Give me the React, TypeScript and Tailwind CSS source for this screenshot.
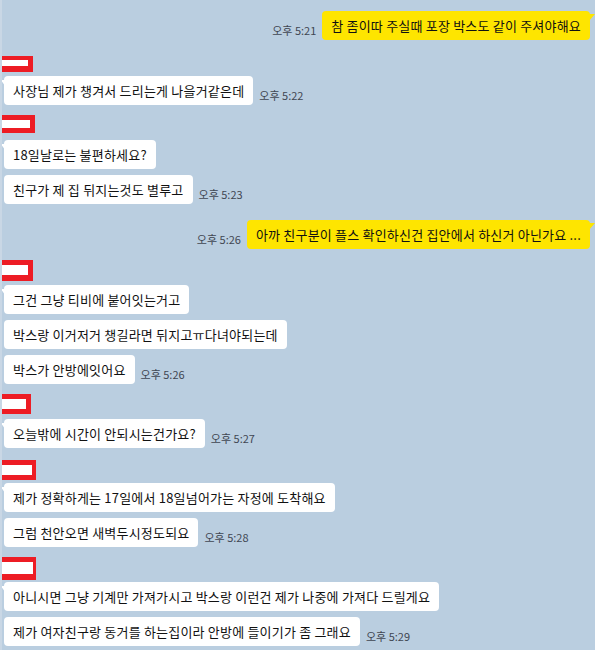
type Item =
  | { kind: "me"; mt: number; text: string; time?: string }
  | { kind: "them"; mt: number; text: string; time?: string; tail?: boolean }
  | { kind: "name"; mt: number; w: number; h: number; inner: [number, number, number] };

// inner = [top, right, bottom] red border widths around the white fill
const items: Item[] = [
  { kind: "me", mt: 11, text: "참 좀이따 주실때 포장 박스도 같이 주셔야해요", time: "오후 5:21" },
  { kind: "name", mt: 16, w: 31, h: 16, inner: [4, 5, 6] },
  { kind: "them", mt: 4, text: "사장님 제가 챙겨서 드리는게 나을거같은데", time: "오후 5:22", tail: true },
  { kind: "name", mt: 10, w: 33, h: 18, inner: [5, 5, 5] },
  { kind: "them", mt: 7, text: "18일날로는 불편하세요?", tail: true },
  { kind: "them", mt: 6, text: "친구가 제 집 뒤지는것도 별루고", time: "오후 5:23" },
  { kind: "me", mt: 16, text: "아까 친구분이 플스 확인하신건 집안에서 하신거 아닌가요 ...", time: "오후 5:26" },
  { kind: "name", mt: 11, w: 31, h: 21, inner: [5, 5, 6] },
  { kind: "them", mt: 4, text: "그건 그냥 티비에 붙어잇는거고", tail: true },
  { kind: "them", mt: 6, text: "박스랑 이거저거 챙길라면 뒤지고ㅠ다녀야되는데" },
  { kind: "them", mt: 6, text: "박스가 안방에잇어요", time: "오후 5:26" },
  { kind: "name", mt: 10, w: 29, h: 20, inner: [5, 5, 5] },
  { kind: "them", mt: 5, text: "오늘밖에 시간이 안되시는건가요?", time: "오후 5:27", tail: true },
  { kind: "name", mt: 12, w: 34, h: 20, inner: [5, 4, 5] },
  { kind: "them", mt: 3, text: "제가 정확하게는 17일에서 18일넘어가는 자정에 도착해요", tail: true },
  { kind: "them", mt: 6, text: "그럼 천안오면 새벽두시정도되요", time: "오후 5:28" },
  { kind: "name", mt: 10, w: 34, h: 23, inner: [5, 3, 6] },
  { kind: "them", mt: 2, text: "아니시면 그냥 기계만 가져가시고 박스랑 이런건 제가 나중에 가져다 드릴게요", tail: true },
  { kind: "them", mt: 6, text: "제가 여자친구랑 동거를 하는집이라 안방에 들이기가 좀 그래요", time: "오후 5:29" },
];

function Time({ t }: { t: string }) {
  return <span className="text-[11px] leading-[14px] text-[#3f4652] whitespace-nowrap pb-[3px]">{t}</span>;
}

function NameBox({ w, h, inner }: { w: number; h: number; inner: [number, number, number] }) {
  return (
    <div className="bg-[#ed1c24] flex" style={{ width: w, height: h, paddingTop: inner[0], paddingRight: inner[1], paddingBottom: inner[2] }}>
      <div className="bg-white flex-1" />
    </div>
  );
}

export default function App() {
  return (
    <div
      className="w-[595px] h-[650px] overflow-hidden bg-[#bacee0] border-l-2 border-[#c9d7e5] flex flex-col"
      style={{ fontFamily: '"Noto Sans CJK KR", "Noto Sans", sans-serif' }}
    >
      {items.map((it, i) => {
        if (it.kind === "name") {
          return (
            <div key={i} style={{ marginTop: it.mt }}>
              <NameBox w={it.w} h={it.h} inner={it.inner} />
            </div>
          );
        }
        if (it.kind === "me") {
          return (
            <div key={i} className="flex items-end justify-end gap-[6px] pr-[5px]" style={{ marginTop: it.mt }}>
              {it.time && <Time t={it.time} />}
              <div className="relative bg-[#fee500] rounded-[4px] h-[29px] px-[9px] text-[13px] leading-[29px] tracking-[0.2px] text-[#111] whitespace-nowrap">
                {it.text}
                <span className="absolute -right-[5px] top-[3px] w-0 h-0 border-t-[7px] border-t-[#fee500] border-r-[6px] border-r-transparent" />
              </div>
            </div>
          );
        }
        return (
          <div key={i} className="flex items-end gap-[6px] pl-[2px]" style={{ marginTop: it.mt }}>
            <div className="relative bg-white rounded-[4px] h-[29px] px-[9px] text-[13px] leading-[29px] tracking-[0.2px] text-[#111] whitespace-nowrap">
              {it.text}
              {it.tail && (
                <span className="absolute -left-[3px] top-[4px] w-0 h-0 border-t-[6px] border-t-white border-l-[4px] border-l-transparent" />
              )}
            </div>
            {it.time && <Time t={it.time} />}
          </div>
        );
      })}
    </div>
  );
}
